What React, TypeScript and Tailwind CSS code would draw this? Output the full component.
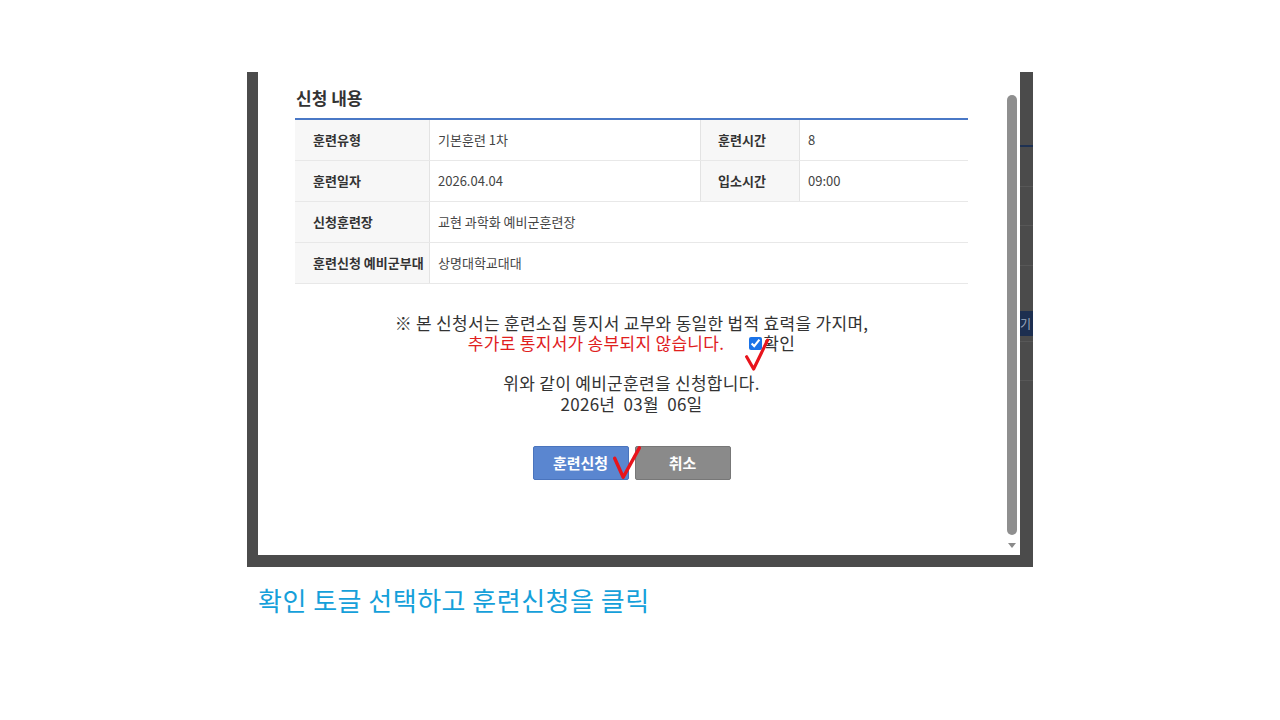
import React from 'react';

const rows = [
  { label: '훈련유형', value: '기본훈련 1차', label2: '훈련시간', value2: '8' },
  { label: '훈련일자', value: '2026.04.04', label2: '입소시간', value2: '09:00' },
  { label: '신청훈련장', value: '교현 과학화 예비군훈련장' },
  { label: '훈련신청 예비군부대', value: '상명대학교대대' },
];

// hand-drawn red tick, drawn over the page
const RedCheck: React.FC<{ points: string; className: string }> = ({ points, className }) => (
  <svg className={className} viewBox="0 0 32 40" fill="none">
    <polyline points={points} stroke="#e8141c" strokeWidth="3.6" strokeLinecap="round" strokeLinejoin="round" />
  </svg>
);

export default function App() {
  return (
    <div
      className="w-[1280px] h-[720px] bg-white pt-[72px] pl-[247px] overflow-hidden"
      style={{ fontFamily: '"Noto Sans CJK KR", "Noto Sans", sans-serif' }}
    >
      {/* Popup frame */}
      <div className="w-[786px] flex flex-col bg-[#4b4b4b]">
        <div className="h-[483px] flex">
          <div className="w-[11px] shrink-0" />

          {/* Dialog */}
          <div className="w-[762px] shrink-0 bg-white relative pl-[37px] pr-[52px]">
            <div className="pt-[14px]">
              <h2 className="pl-[1px] pb-[8px] text-[17px] leading-[24px] font-bold text-[#333] border-b-2 border-[#4a78c6]">
                신청 내용
              </h2>

              <div className="text-[13px] text-[#444]">
                {rows.map((r) => (
                  <div key={r.label} className="flex h-[41px] border-b border-[#e8e8e8]">
                    <div className="w-[135px] shrink-0 bg-[#f7f7f7] border-r border-[#e3e3e3] pl-[18px] flex items-center font-bold text-[#333]">
                      {r.label}
                    </div>
                    {r.label2 ? (
                      <>
                        <div className="w-[270px] shrink-0 pl-[8px] flex items-center">{r.value}</div>
                        <div className="w-[100px] shrink-0 bg-[#f7f7f7] border-x border-[#e3e3e3] pl-[17px] flex items-center font-bold text-[#333]">
                          {r.label2}
                        </div>
                        <div className="flex-1 pl-[8px] flex items-center">{r.value2}</div>
                      </>
                    ) : (
                      <div className="flex-1 pl-[8px] flex items-center">{r.value}</div>
                    )}
                  </div>
                ))}
              </div>

              {/* Notice */}
              <div className="mt-[29px] text-[17px] leading-[20px] tracking-[0.3px] text-[#333] text-center">
                <p>※ 본 신청서는 훈련소집 통지서 교부와 동일한 법적 효력을 가지며,</p>
                <p className="flex items-center justify-center">
                  <span className="text-[#e0201e]">추가로 통지서가 송부되지 않습니다.</span>
                  <span className="relative ml-[25px] flex items-center">
                    <input type="checkbox" defaultChecked readOnly className="w-[13px] h-[13px] m-0 accent-[#1a73e8]" />
                    <span className="ml-[1px]">확인</span>
                    <RedCheck points="3,22 11,36 27,3" className="absolute left-[-5px] top-[3px] w-[28px] h-[38px]" />
                  </span>
                </p>
                <p className="mt-[20px]">위와 같이 예비군훈련을 신청합니다.</p>
                <p className="mt-[1px] whitespace-pre">2026년  03월  06일</p>
              </div>

              {/* Buttons */}
              <div className="mt-[32px] flex justify-center gap-[6px]">
                <div className="relative">
                  <button className="w-[96px] h-[34px] rounded-[2px] bg-[#5a86d0] border border-[#4a74bd] text-white text-[15px] font-bold">
                    훈련신청
                  </button>
                  <RedCheck points="3,14 12,34 29,3" className="absolute left-[78px] top-[-1px] w-[32px] h-[38px]" />
                </div>
                <button className="w-[96px] h-[34px] rounded-[2px] bg-[#8a8a8a] border border-[#777] text-white text-[15px] font-bold">
                  취소
                </button>
              </div>
            </div>

            {/* Scrollbar */}
            <div className="absolute right-[3px] top-[23px] w-[10px] h-[440px] rounded-full bg-[#8f8f8f]" />
            <div className="absolute right-[4px] top-[471px] w-0 h-0 border-x-[4px] border-x-transparent border-t-[5px] border-t-[#8a8a8a]" />
          </div>

          {/* Background page peeking through */}
          <div className="w-[13px] shrink-0 flex flex-col">
            <div className="h-[75px] border-b-2 border-[#1e3152]" />
            <div className="h-[40px] border-b border-[#575757]" />
            <div className="h-[39px] border-b border-[#575757]" />
            <div className="h-[40px] border-b border-[#575757]" />
            <div className="mt-[45px] h-[25px] bg-[#1d2f50] text-[12px] leading-[25px] text-[#9aa6bb] overflow-hidden whitespace-nowrap">
              기
            </div>
            <div className="h-[6px] border-b border-[#575757]" />
            <div className="h-[39px] border-b border-[#575757]" />
          </div>
        </div>
        <div className="h-[12px]" />
      </div>

      {/* Caption */}
      <p className="ml-[11px] mt-[17px] text-[26px] leading-[32px] text-[#15a0da] tracking-[0.5px]">
        확인 토글 선택하고 훈련신청을 클릭
      </p>
    </div>
  );
}
